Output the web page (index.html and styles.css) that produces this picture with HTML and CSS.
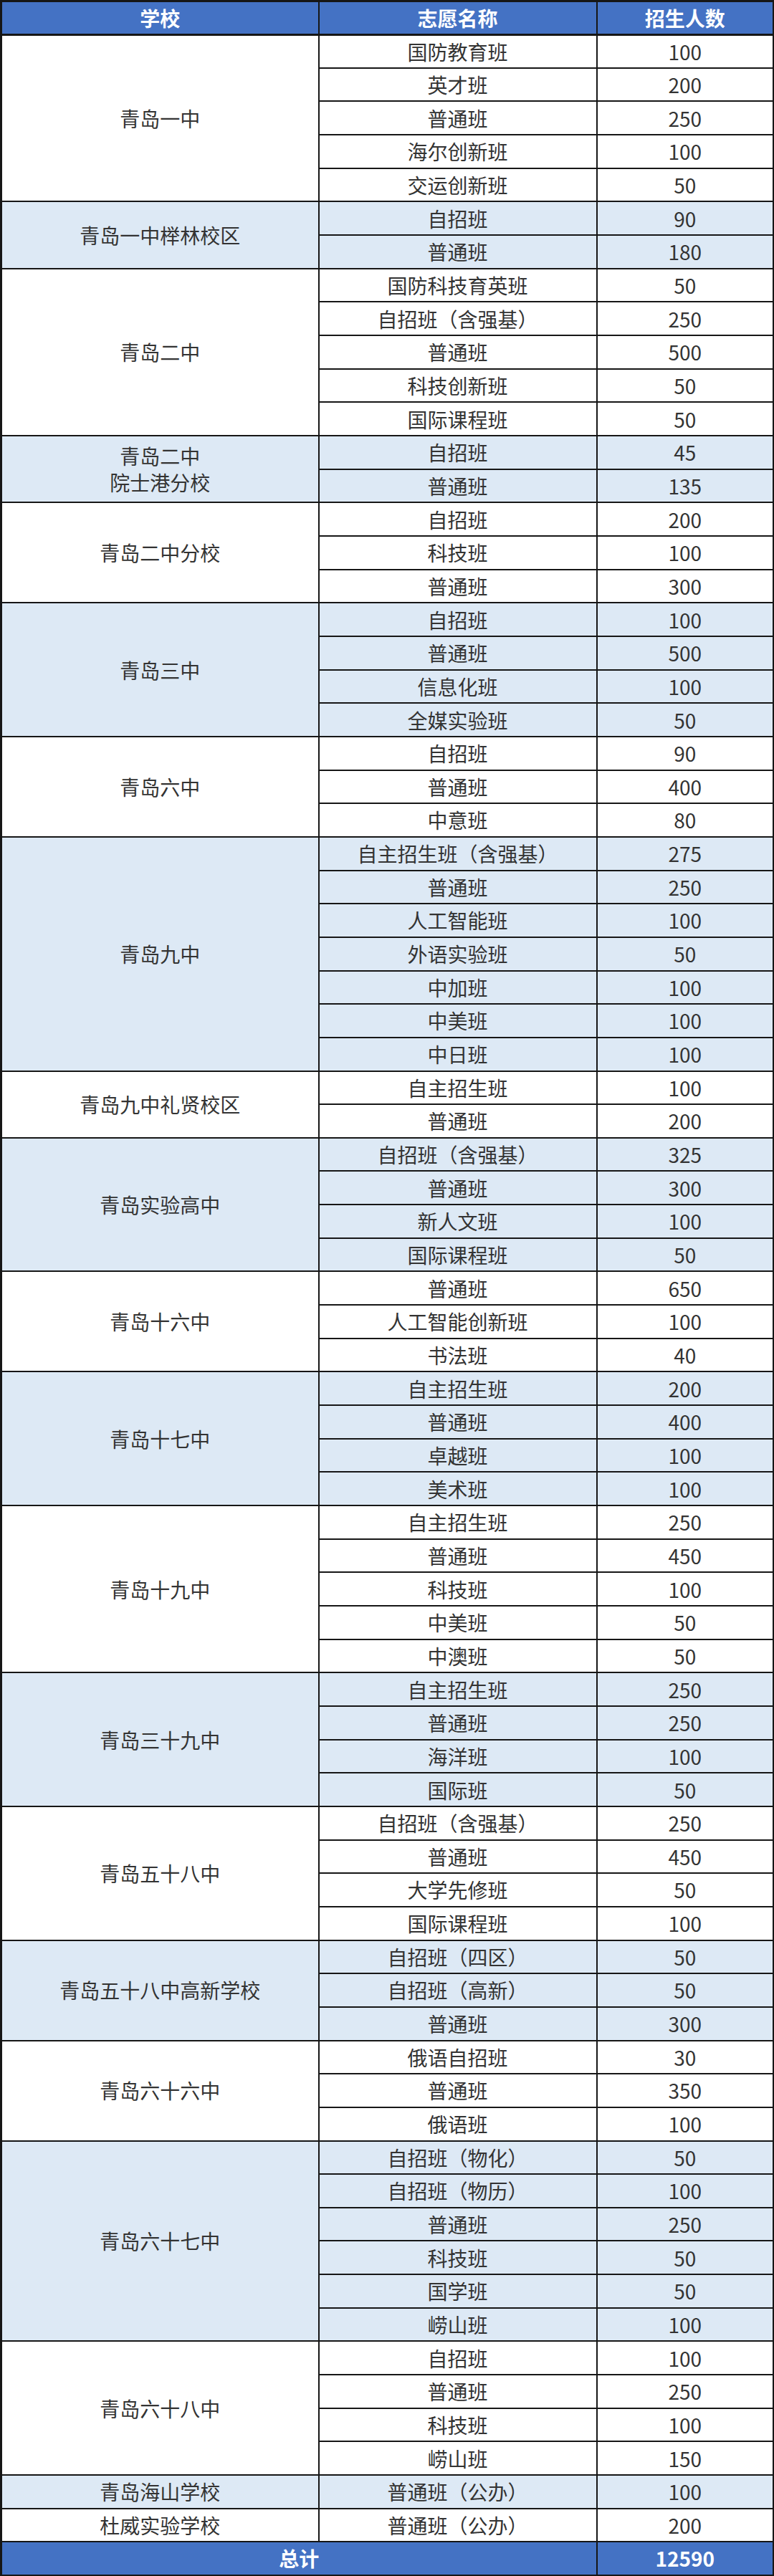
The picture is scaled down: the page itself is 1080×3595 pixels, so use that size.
FILE: index.html
```html
<!DOCTYPE html>
<html lang="zh-CN">
<head>
<meta charset="utf-8">
<title>青岛普通高中招生计划</title>
<link rel="stylesheet" href="styles.css">
</head>
<body>
<table class="plan">
  <colgroup>
    <col class="c-school">
    <col class="c-name">
    <col class="c-num">
  </colgroup>
  <thead>
    <tr class="head"><th>学校</th><th>志愿名称</th><th>招生人数</th></tr>
  </thead>
  <tbody class="w">
    <tr><td rowspan="5">青岛一中</td><td>国防教育班</td><td>100</td></tr>
    <tr><td>英才班</td><td>200</td></tr>
    <tr><td>普通班</td><td>250</td></tr>
    <tr><td>海尔创新班</td><td>100</td></tr>
    <tr><td>交运创新班</td><td>50</td></tr>
  </tbody>
  <tbody class="b">
    <tr><td rowspan="2">青岛一中榉林校区</td><td>自招班</td><td>90</td></tr>
    <tr><td>普通班</td><td>180</td></tr>
  </tbody>
  <tbody class="w">
    <tr><td rowspan="5">青岛二中</td><td>国防科技育英班</td><td>50</td></tr>
    <tr><td>自招班（含强基）</td><td>250</td></tr>
    <tr><td>普通班</td><td>500</td></tr>
    <tr><td>科技创新班</td><td>50</td></tr>
    <tr><td>国际课程班</td><td>50</td></tr>
  </tbody>
  <tbody class="b">
    <tr><td rowspan="2" class="two">青岛二中<br>院士港分校</td><td>自招班</td><td>45</td></tr>
    <tr><td>普通班</td><td>135</td></tr>
  </tbody>
  <tbody class="w">
    <tr><td rowspan="3">青岛二中分校</td><td>自招班</td><td>200</td></tr>
    <tr><td>科技班</td><td>100</td></tr>
    <tr><td>普通班</td><td>300</td></tr>
  </tbody>
  <tbody class="b">
    <tr><td rowspan="4">青岛三中</td><td>自招班</td><td>100</td></tr>
    <tr><td>普通班</td><td>500</td></tr>
    <tr><td>信息化班</td><td>100</td></tr>
    <tr><td>全媒实验班</td><td>50</td></tr>
  </tbody>
  <tbody class="w">
    <tr><td rowspan="3">青岛六中</td><td>自招班</td><td>90</td></tr>
    <tr><td>普通班</td><td>400</td></tr>
    <tr><td>中意班</td><td>80</td></tr>
  </tbody>
  <tbody class="b">
    <tr><td rowspan="7">青岛九中</td><td>自主招生班（含强基）</td><td>275</td></tr>
    <tr><td>普通班</td><td>250</td></tr>
    <tr><td>人工智能班</td><td>100</td></tr>
    <tr><td>外语实验班</td><td>50</td></tr>
    <tr><td>中加班</td><td>100</td></tr>
    <tr><td>中美班</td><td>100</td></tr>
    <tr><td>中日班</td><td>100</td></tr>
  </tbody>
  <tbody class="w">
    <tr><td rowspan="2">青岛九中礼贤校区</td><td>自主招生班</td><td>100</td></tr>
    <tr><td>普通班</td><td>200</td></tr>
  </tbody>
  <tbody class="b">
    <tr><td rowspan="4">青岛实验高中</td><td>自招班（含强基）</td><td>325</td></tr>
    <tr><td>普通班</td><td>300</td></tr>
    <tr><td>新人文班</td><td>100</td></tr>
    <tr><td>国际课程班</td><td>50</td></tr>
  </tbody>
  <tbody class="w">
    <tr><td rowspan="3">青岛十六中</td><td>普通班</td><td>650</td></tr>
    <tr><td>人工智能创新班</td><td>100</td></tr>
    <tr><td>书法班</td><td>40</td></tr>
  </tbody>
  <tbody class="b">
    <tr><td rowspan="4">青岛十七中</td><td>自主招生班</td><td>200</td></tr>
    <tr><td>普通班</td><td>400</td></tr>
    <tr><td>卓越班</td><td>100</td></tr>
    <tr><td>美术班</td><td>100</td></tr>
  </tbody>
  <tbody class="w">
    <tr><td rowspan="5">青岛十九中</td><td>自主招生班</td><td>250</td></tr>
    <tr><td>普通班</td><td>450</td></tr>
    <tr><td>科技班</td><td>100</td></tr>
    <tr><td>中美班</td><td>50</td></tr>
    <tr><td>中澳班</td><td>50</td></tr>
  </tbody>
  <tbody class="b">
    <tr><td rowspan="4">青岛三十九中</td><td>自主招生班</td><td>250</td></tr>
    <tr><td>普通班</td><td>250</td></tr>
    <tr><td>海洋班</td><td>100</td></tr>
    <tr><td>国际班</td><td>50</td></tr>
  </tbody>
  <tbody class="w">
    <tr><td rowspan="4">青岛五十八中</td><td>自招班（含强基）</td><td>250</td></tr>
    <tr><td>普通班</td><td>450</td></tr>
    <tr><td>大学先修班</td><td>50</td></tr>
    <tr><td>国际课程班</td><td>100</td></tr>
  </tbody>
  <tbody class="b">
    <tr><td rowspan="3">青岛五十八中高新学校</td><td>自招班（四区）</td><td>50</td></tr>
    <tr><td>自招班（高新）</td><td>50</td></tr>
    <tr><td>普通班</td><td>300</td></tr>
  </tbody>
  <tbody class="w">
    <tr><td rowspan="3">青岛六十六中</td><td>俄语自招班</td><td>30</td></tr>
    <tr><td>普通班</td><td>350</td></tr>
    <tr><td>俄语班</td><td>100</td></tr>
  </tbody>
  <tbody class="b">
    <tr><td rowspan="6">青岛六十七中</td><td>自招班（物化）</td><td>50</td></tr>
    <tr><td>自招班（物历）</td><td>100</td></tr>
    <tr><td>普通班</td><td>250</td></tr>
    <tr><td>科技班</td><td>50</td></tr>
    <tr><td>国学班</td><td>50</td></tr>
    <tr><td>崂山班</td><td>100</td></tr>
  </tbody>
  <tbody class="w">
    <tr><td rowspan="4">青岛六十八中</td><td>自招班</td><td>100</td></tr>
    <tr><td>普通班</td><td>250</td></tr>
    <tr><td>科技班</td><td>100</td></tr>
    <tr><td>崂山班</td><td>150</td></tr>
  </tbody>
  <tbody class="b">
    <tr><td>青岛海山学校</td><td>普通班（公办）</td><td>100</td></tr>
  </tbody>
  <tbody class="w">
    <tr><td>杜威实验学校</td><td>普通班（公办）</td><td>200</td></tr>
  </tbody>
  <tfoot>
    <tr class="total"><td colspan="2">总计</td><td>12590</td></tr>
  </tfoot>
</table>
</body>
</html>
```
FILE: styles.css
```css
html, body {
  margin: 0;
  padding: 0;
  background: #ffffff;
}

body {
  font-family: "Noto Sans CJK SC", "Noto Sans", sans-serif;
  color: #333333;
}

.plan {
  width: 1078px;
  table-layout: fixed;
  border-collapse: collapse;
  border: 3px solid #161616;
  font-size: 28px;
}

.c-school { width: 443px; }
.c-name { width: 388px; }
.c-num { width: 247px; }

.plan tr {
  height: 46.66px;
}

.plan th,
.plan td {
  border: 2px solid #161616;
  padding: 0;
  text-align: center;
  vertical-align: middle;
  line-height: 1.15;
  white-space: nowrap;
}

.head th {
  background: #4472c4;
  color: #ffffff;
  font-weight: 700;
  font-size: 28px;
  border-bottom-width: 3px;
}

.w td { background: #ffffff; }
.b td { background: #dde9f5; }

.plan td.two {
  line-height: 1.32;
}

.total td {
  background: #4472c4;
  color: #ffffff;
  font-weight: 700;
  font-size: 28px;
}
```
